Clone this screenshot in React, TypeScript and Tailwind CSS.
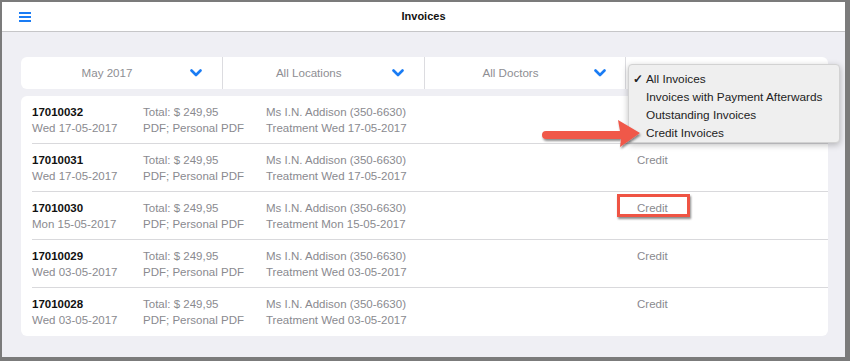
import React from "react";

const rows = [
  { id: "17010032", date: "Wed 17-05-2017", treat: "Treatment Wed 17-05-2017", credit: false },
  { id: "17010031", date: "Wed 17-05-2017", treat: "Treatment Wed 17-05-2017", credit: true },
  { id: "17010030", date: "Mon 15-05-2017", treat: "Treatment Mon 15-05-2017", credit: true },
  { id: "17010029", date: "Wed 03-05-2017", treat: "Treatment Wed 03-05-2017", credit: true },
  { id: "17010028", date: "Wed 03-05-2017", treat: "Treatment Wed 03-05-2017", credit: true },
];

function Chevron() {
  return (
    <svg width="12" height="8" viewBox="0 0 12 8" className="block">
      <path d="M1.5 1.5 L6 6 L10.5 1.5" fill="none" stroke="#1a7cf4" strokeWidth="2.6" strokeLinecap="round" strokeLinejoin="round" />
    </svg>
  );
}

function Segment({ label, last }: { label?: string; last?: boolean }) {
  return (
    <div className={"relative h-full flex items-center " + (last ? "" : "border-r border-[#dcdce0]")}>
      {label && (
        <>
          <div className="w-[172px] text-center text-[11.6px] text-[#8e8e93]">{label}</div>
          <div className="ml-[-3px]">
            <Chevron />
          </div>
        </>
      )}
    </div>
  );
}

export default function App() {
  return (
    <div className="relative w-[850px] h-[361px] border-t-2 border-l-2 border-r-[5px] border-b-4 border-[#7b7b7b] bg-[#efeff4] flex flex-col font-['Liberation_Sans',Arial,sans-serif] overflow-hidden">
      <div className="h-[30px] shrink-0 bg-white border-b border-[#c6c6c8] flex items-center">
        <div className="w-[60px] pl-[17px]">
          <div className="flex flex-col gap-[2px] w-[12px]">
            <div className="h-[2px] bg-[#1a7cf4]" />
            <div className="h-[2px] bg-[#1a7cf4]" />
            <div className="h-[2px] bg-[#1a7cf4]" />
          </div>
        </div>
        <div className="flex-1 text-center text-[11px] font-bold text-[#111]">Invoices</div>
        <div className="w-[60px]" />
      </div>

      <div className="pt-[25px] pl-[19px] pr-[17px]">
        <div className="h-[32px] bg-white rounded-[6px] grid grid-cols-4">
          <Segment label="May 2017" />
          <Segment label="All Locations" />
          <Segment label="All Doctors" />
          <Segment last />
        </div>

        <div className="mt-[7px] bg-white rounded-[6px] overflow-hidden">
          {rows.map((r, i) => (
            <div key={r.id} className="pl-[11px]">
              <div className={"h-[48px] flex items-center text-[11.5px] leading-[16px] " + (i < rows.length - 1 ? "border-b border-[#d9d9dc]" : "")}>
                <div className="w-[111px]">
                  <div className="font-bold text-[#111]">{r.id}</div>
                  <div className="text-[#8a8a8f]">{r.date}</div>
                </div>
                <div className="w-[123px] text-[#8a8a8f]">
                  <div>Total: $ 249,95</div>
                  <div>PDF; Personal PDF</div>
                </div>
                <div className="w-[371px] text-[#8a8a8f]">
                  <div>Ms I.N. Addison (350-6630)</div>
                  <div>{r.treat}</div>
                </div>
                <div className="text-[#8a8a8f]">
                  <div>{r.credit ? "Credit" : "\u00a0"}</div>
                  <div>&nbsp;</div>
                </div>
              </div>
            </div>
          ))}
        </div>
      </div>

      {/* dropdown menu */}
      <div className="absolute left-[626px] top-[62px] w-[212px] h-[79px] bg-[#efefef] border border-[#d2d2d2] rounded-[4px] shadow-[0_2px_6px_rgba(0,0,0,0.25)] pt-[5px] text-[11.8px] leading-[18px] text-[#222]">
        <div className="flex">
          <span className="w-[17px] pl-[4px] text-[12px] font-bold">✓</span>
          <span>All Invoices</span>
        </div>
        <div className="pl-[17px]">Invoices with Payment Afterwards</div>
        <div className="pl-[17px]">Outstanding Invoices</div>
        <div className="pl-[17px]">Credit Invoices</div>
      </div>

      {/* red highlight box */}
      <div className="absolute left-[615px] top-[192px] w-[73px] h-[23px] border-[3px] border-[#ef5444] shadow-[1px_2px_2px_rgba(0,0,0,0.45)]" />

      {/* red arrow */}
      <svg className="absolute left-[534px] top-[113px]" width="110" height="40" viewBox="0 0 110 40">
        <defs>
          <filter id="sh" x="-10%" y="-20%" width="130%" height="160%">
            <feDropShadow dx="1" dy="2" stdDeviation="1" floodColor="#000" floodOpacity="0.45" />
          </filter>
        </defs>
        <g filter="url(#sh)">
          <path d="M10 16 L84 16 L82 5 L104 18 L84 32 L85 24 L10 24 A4 4 0 0 1 10 16 Z" fill="#f0584a" />
        </g>
      </svg>
    </div>
  );
}
